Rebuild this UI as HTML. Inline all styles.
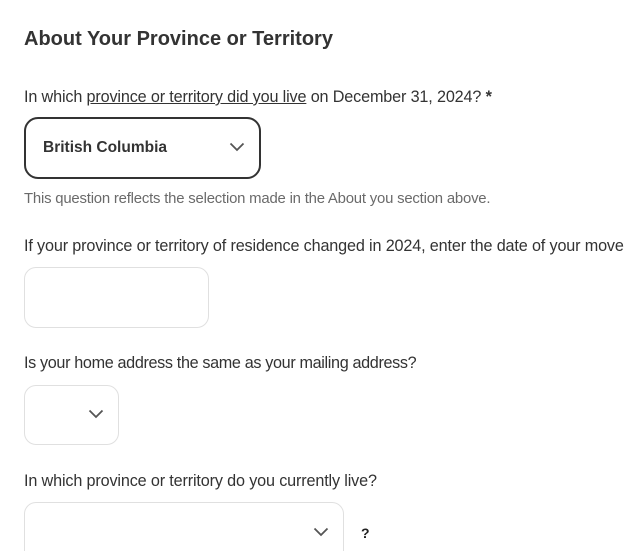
<!DOCTYPE html>
<html><head><style>
html,body{margin:0;width:643px;height:551px;overflow:hidden}
body{background:#fff;font-family:"Liberation Sans",sans-serif;color:#333;position:relative}
.a{position:absolute;white-space:nowrap}
.l{font-size:16.2px;color:#333;letter-spacing:-0.15px}
.box{position:absolute;box-sizing:border-box;border:1px solid #e0e0e0;border-radius:12px;background:#fff}
.chev{position:absolute}
</style></head><body>
<div class="a" style="left:24px;top:28px;font-size:20px;font-weight:bold;color:#333">About Your Province or Territory</div>
<div class="a l" style="left:24px;top:88px">In which <span style="text-decoration:underline">province or territory did you live</span> on December 31, 2024? <b>*</b></div>
<div class="box" style="left:24px;top:117px;width:237px;height:62px;border:2px solid #333;border-radius:14px"></div>
<div class="a" style="left:43px;top:139px;font-size:15.5px;font-weight:bold;color:#333">British Columbia</div>
<svg class="chev" style="left:229px;top:142px" width="16" height="10"><path d="M1.5 1.5L8 8L14.5 1.5" fill="none" stroke="#555" stroke-width="1.8"/></svg>
<div class="a" style="left:24px;top:191px;font-size:14.9px;color:#6a6a6a;letter-spacing:-0.2px">This question reflects the selection made in the About you section above.</div>
<div class="a l" style="left:24px;top:237px">If your province or territory of residence changed in 2024, enter the date of your move</div>
<div class="box" style="left:24px;top:267px;width:185px;height:61px"></div>
<div class="a l" style="left:24px;top:354px;letter-spacing:-0.35px">Is your home address the same as your mailing address?</div>
<div class="box" style="left:24px;top:385px;width:95px;height:60px"></div>
<svg class="chev" style="left:88px;top:409px" width="16" height="10"><path d="M1.5 1.5L8 8L14.5 1.5" fill="none" stroke="#555" stroke-width="1.8"/></svg>
<div class="a l" style="left:24px;top:472px">In which province or territory do you currently live?</div>
<div class="box" style="left:24px;top:502px;width:320px;height:70px"></div>
<svg class="chev" style="left:313px;top:527px" width="16" height="10"><path d="M1.5 1.5L8 8L14.5 1.5" fill="none" stroke="#555" stroke-width="1.8"/></svg>
<div class="a" style="left:361px;top:525px;font-size:14px;font-weight:bold;color:#222">?</div>
</body></html>
